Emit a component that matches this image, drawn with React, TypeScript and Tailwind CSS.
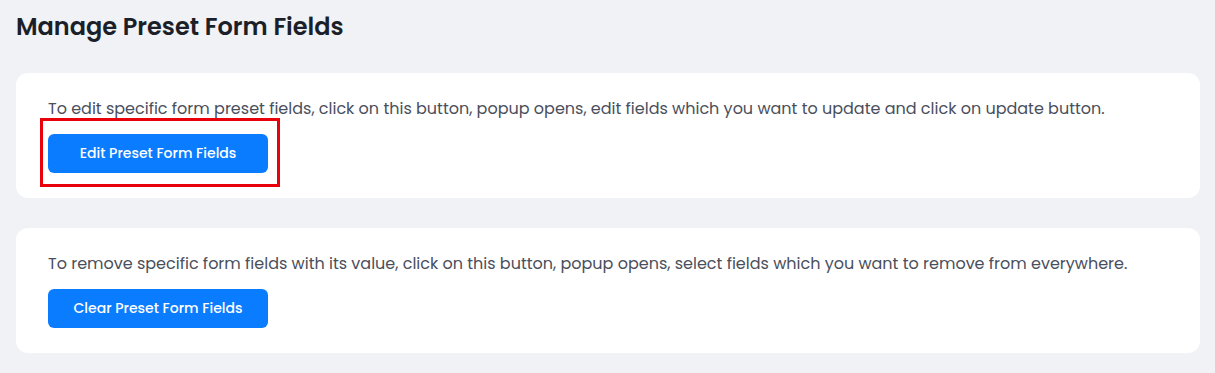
import React from "react";

export default function App() {
  return (
    <div
      className="w-[1215px] h-[373px] bg-[#f0f2f5] pl-4 pr-[15px] pt-[11px] overflow-hidden"
      style={{ fontFamily: "Poppins, Inter, 'Open Sans', sans-serif" }}
    >
      <h1 className="text-[24px] leading-[32px] font-semibold text-[#1b1f29]">
        Manage Preset Form Fields
      </h1>
      <div className="mt-[30px] bg-white rounded-xl pl-8 pt-6 pb-[25px]">
        <p className="text-[16px] leading-6 text-[#4a4f5c]">
          To edit specific form preset fields, click on this button, popup opens, edit fields which you want to update and click on update button.
        </p>
        <div className="relative mt-[13px] w-[220px]">
          <button className="w-[220px] h-[39px] rounded-md bg-[#0a7cff] text-white text-[14px] font-medium">
            Edit Preset Form Fields
          </button>
          <div className="absolute -left-2 -right-3 -top-4 -bottom-[14px] border-[3px] border-[#e8000b] pointer-events-none" />
        </div>
      </div>
      <div className="mt-[30px] bg-white rounded-xl pl-8 pt-6 pb-[25px]">
        <p className="text-[16px] leading-6 text-[#4a4f5c]">
          To remove specific form fields with its value, click on this button, popup opens, select fields which you want to remove from everywhere.
        </p>
        <button className="mt-[13px] w-[220px] h-[39px] rounded-md bg-[#0a7cff] text-white text-[14px] font-medium">
          Clear Preset Form Fields
        </button>
      </div>
    </div>
  );
}
